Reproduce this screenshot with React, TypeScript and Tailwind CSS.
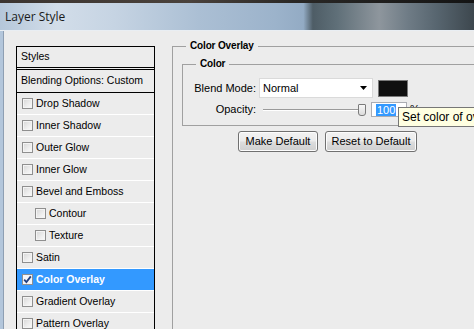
import React from "react";

type StyleRow = { label: string; sub?: boolean; active?: boolean };

const rows: StyleRow[] = [
  { label: "Drop Shadow" },
  { label: "Inner Shadow" },
  { label: "Outer Glow" },
  { label: "Inner Glow" },
  { label: "Bevel and Emboss" },
  { label: "Contour", sub: true },
  { label: "Texture", sub: true },
  { label: "Satin" },
  { label: "Color Overlay", active: true },
  { label: "Gradient Overlay" },
  { label: "Pattern Overlay" },
];

function CheckBox({ checked }: { checked?: boolean }) {
  return (
    <div
      className={`w-[11px] h-[11px] shrink-0 border border-[#8f8f8f] flex items-center justify-center ${
        checked
          ? "bg-[#f4f6fa]"
          : "bg-[linear-gradient(135deg,#d6d6d6_0%,#eeeeee_60%,#fbfbfb_100%)] shadow-[inset_0_0_0_1px_#f4f4f4]"
      }`}
    >
      {checked && (
        <svg width="9" height="9" viewBox="0 0 9 9">
          <path d="M1.2 4.6 L3.4 7 L7.8 1.4" stroke="#21407f" strokeWidth="1.8" fill="none" />
        </svg>
      )}
    </div>
  );
}

function WinButton({ label, width }: { label: string; width: string }) {
  return (
    <div
      className={`${width} h-[21px] flex items-center justify-center rounded-[3px] border border-[#707070] bg-[linear-gradient(180deg,#f2f2f2_0%,#ebebeb_48%,#dddddd_52%,#cfcfcf_100%)] shadow-[inset_0_0_0_1px_#fcfcfc] text-[11px] text-black`}
    >
      {label}
    </div>
  );
}

// group box header: short line, bold caption, rest of line
function GroupHeader({ title }: { title: string }) {
  return (
    <div className="h-[14px] flex items-center">
      <div className="w-[14px] h-px bg-[#a0a0a0] shrink-0" />
      <span className="px-[4px] text-[10px] font-bold tracking-[-0.15px] leading-[14px]">{title}</span>
      <div className="flex-1 h-px bg-[#a0a0a0]" />
    </div>
  );
}

export default function App() {
  return (
    <div className="relative w-[474px] h-[329px] overflow-hidden bg-[#ececec] font-['Liberation_Sans',Arial,sans-serif] text-black">
      {/* Title bar */}
      <div className="h-[3px] bg-[linear-gradient(90deg,#3b3430_0%,#4a423c_40%,#2a2826_62%,#141414_100%)]" />
      <div className="h-[28px] flex items-center pl-[5px] border-b border-[#e9eef3] bg-[linear-gradient(90deg,#b5c7da_0%,#d2dde9_12%,#c6d4e3_24%,#abbfd4_42%,#9cb3cb_58%,#93abc4_64%,#4e5d66_66%,#5f6f78_71%,#8e969d_80%,#6f7c86_86%,#586670_92%,#3d474e_100%)]">
        <span className="font-['Open_Sans',sans-serif] text-[12px] text-[#1a1a1a]">Layer Style</span>
      </div>

      <div className="flex h-[298px]">
        {/* window frame */}
        <div className="w-[4px] shrink-0 bg-[#b3c6db] border-r border-[#8e9fb3]" />

        {/* styles list */}
        <div className="ml-[12px] mt-[15px] w-[139px] shrink-0 border-x border-t border-black flex flex-col text-[10.5px]">
          <div className="h-[23px] shrink-0 flex items-center pl-[4px] border-b-[3px] border-double border-black">
            Styles
          </div>
          <div className="h-[23px] shrink-0 flex items-center pl-[4px] border-b border-black">
            Blending Options: Custom
          </div>
          {rows.map((r) => (
            <div
              key={r.label}
              className={`h-[22px] shrink-0 flex items-center gap-[3px] border-b border-white ${
                r.sub ? "pl-[18px]" : "pl-[5px]"
              } ${r.active ? "bg-[#3399ff] text-white font-bold" : ""}`}
            >
              <CheckBox checked={r.active} />
              <span>{r.label}</span>
            </div>
          ))}
        </div>

        {/* Color Overlay group */}
        <div className="ml-[17px] mt-[8px] w-[330px] shrink-0 flex flex-col">
          <GroupHeader title="Color Overlay" />
          <div className="-mt-[7px] pt-[7px] pl-[9px] border-l border-[#a0a0a0] flex-1">
            {/* Color group */}
            <div className="mt-[4px] w-[320px] flex flex-col">
              <GroupHeader title="Color" />
              <div className="-mt-[7px] pt-[14px] pb-[8px] border-l border-b border-[#a0a0a0] text-[11px]">
                <div className="flex items-center">
                  <div className="w-[73px] text-right">Blend Mode:</div>
                  <div className="ml-[3px] w-[114px] h-[20px] bg-white border border-[#dadada] flex items-center justify-between pl-[3px] pr-[5px]">
                    <span>Normal</span>
                    <svg width="7" height="4" viewBox="0 0 7 4">
                      <path d="M0 0 H7 L3.5 4 Z" fill="#000" />
                    </svg>
                  </div>
                  <div className="ml-[5px] w-[30px] h-[17px] border border-[#7a7a7a] bg-[#101010]" />
                </div>

                <div className="mt-[4px] flex items-center h-[15px]">
                  <div className="w-[73px] text-right">Opacity:</div>
                  <div className="ml-[3px] w-[107px] flex items-center pl-[4px]">
                    <div className="flex-1 h-[2px] border-t border-[#9a9a9a] border-b border-b-white" />
                    <div className="w-[8px] h-[12px] rounded-b-[3px] rounded-t-[1px] border border-[#7b7b7b] bg-[linear-gradient(180deg,#f7f7f7,#dcdcdc)]" />
                  </div>
                  <div className="ml-[5px] w-[36px] h-[15px] bg-white border border-[#abadb3] flex items-center pl-[4px]">
                    <span className="bg-[#3399ff] text-white leading-[12px] px-[1px]">100</span>
                  </div>
                  <span className="ml-[3px]">%</span>
                </div>
              </div>
            </div>

            <div className="mt-[5px] ml-[56px] flex gap-[7px]">
              <WinButton label="Make Default" width="w-[80px]" />
              <WinButton label="Reset to Default" width="w-[92px]" />
            </div>
          </div>
        </div>
      </div>

      {/* tooltip */}
      <div className="absolute left-[398px] top-[107px] h-[20px] w-[120px] bg-[#ffffe1] border border-[#767676] flex items-center pl-[3px] text-[12px] whitespace-nowrap">
        Set color of overlay.
      </div>
    </div>
  );
}
